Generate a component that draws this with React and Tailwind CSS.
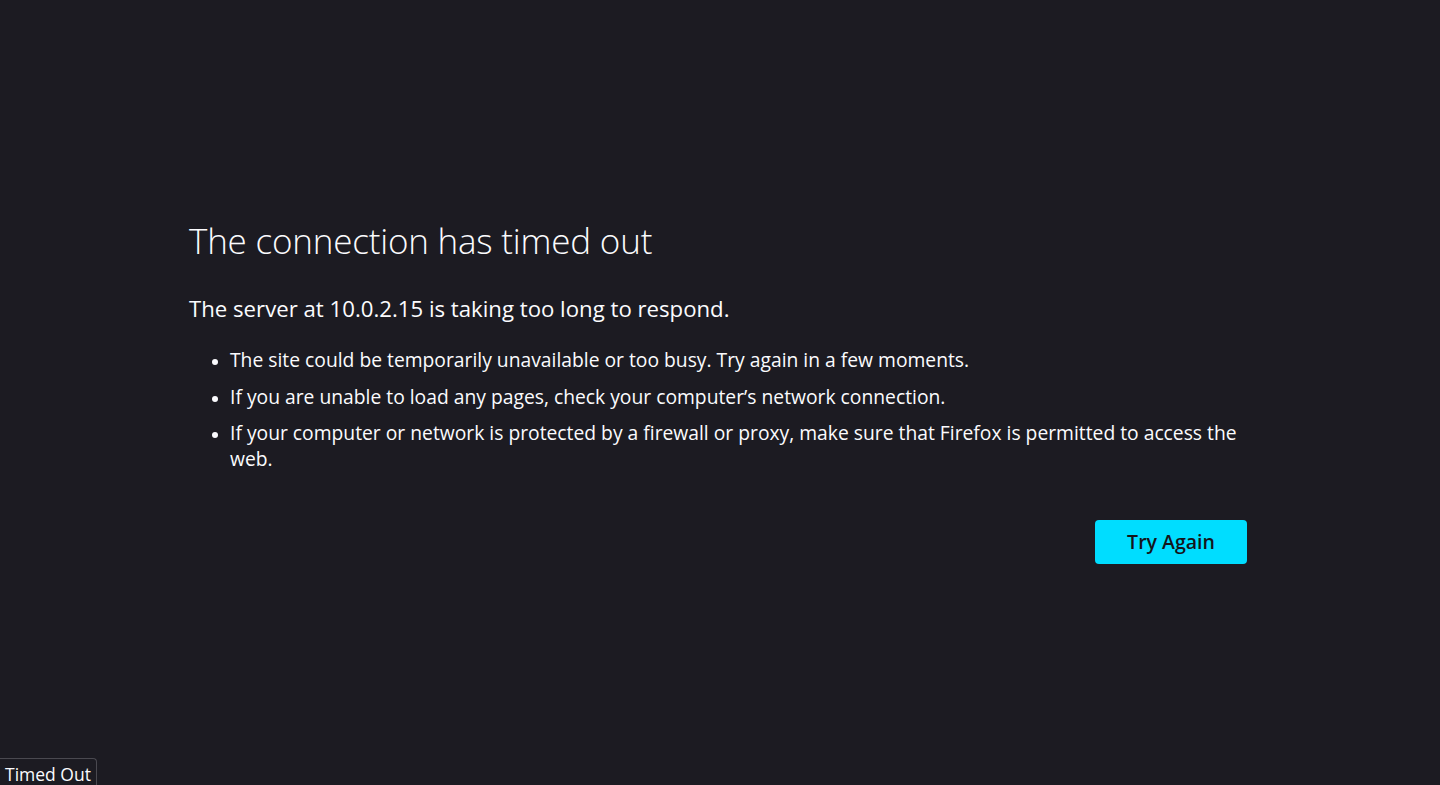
export default function App() {
  return (
    <div className="relative h-[785px] w-[1440px] overflow-hidden bg-[#1c1b22] text-[#fbfbfe] font-['Open_Sans',sans-serif]">
      <div className="pl-[189px] pt-[218px] w-[1247px]">
        <h1 className="text-[35px] font-light leading-[46px] tracking-[-0.2px]">The connection has timed out</h1>
        <p className="mt-[30px] text-[22.2px] leading-[30px]">The server at 10.0.2.15 is taking too long to respond.</p>
        <ul className="mt-[23px] list-disc pl-[41px] text-[19.3px] leading-[26px] marker:text-[16px]">
          <li className="mb-[10.5px]">The site could be temporarily unavailable or too busy. Try again in a few moments.</li>
          <li className="mb-[10.5px]">If you are unable to load any pages, check your computer’s network connection.</li>
          <li>If your computer or network is protected by a firewall or proxy, make sure that Firefox is permitted to access the web.</li>
        </ul>
        <div className="mt-[48px] flex justify-end">
          <button className="h-[44px] w-[152px] rounded-[4px] bg-[#00ddff] text-[19.5px] font-semibold text-[#15141a]">Try Again</button>
        </div>
      </div>
      <div className="absolute bottom-0 left-0 rounded-tr-[4px] border-t border-r border-[#4a4950] bg-[#1c1b22] px-[5px] pt-[4px] text-[17.5px] leading-[22px] text-[#fbfbfe]">Timed Out</div>
    </div>
  );
}
